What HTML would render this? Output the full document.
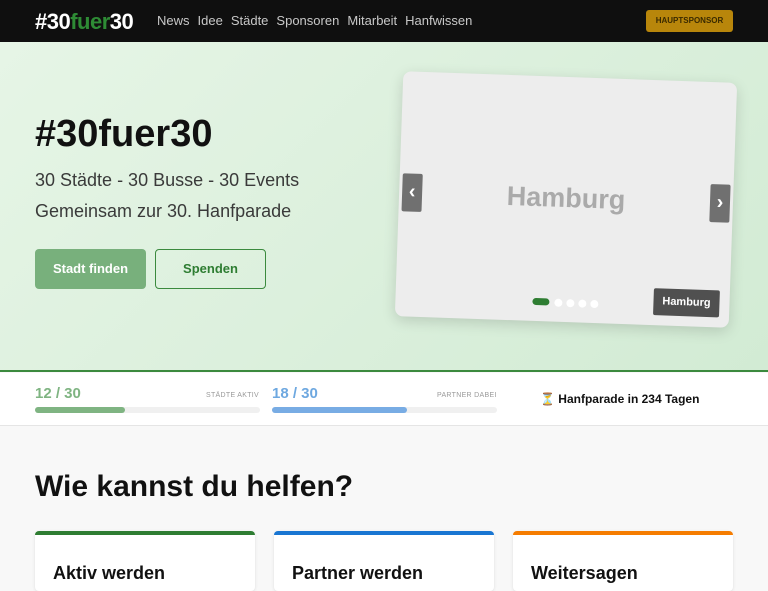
<!DOCTYPE html>
<html><head><meta charset="utf-8"><style>
*{box-sizing:border-box;margin:0;padding:0}
body{width:768px;height:576px;overflow:hidden;font-family:"Liberation Sans",sans-serif;background:#f8f8f8;position:relative}
.nav{position:absolute;left:0;top:0;width:768px;height:42px;background:#0f0f0f}
.logo{position:absolute;left:35px;top:9px;color:#fff;font-weight:bold;font-size:22px;letter-spacing:-0.5px}
.logo span{color:#2e8b35}
.links{position:absolute;left:157px;top:13px;font-size:13px;color:#c8c8c8}
.links span{margin-right:8px}
.hs{position:absolute;left:646px;top:10px;width:87px;height:22px;background:#b8860b;border-radius:3px;color:#3a2a00;font-size:8px;font-weight:bold;text-align:center;line-height:22px}
.hero{position:absolute;left:0;top:42px;width:768px;height:330px;background:linear-gradient(135deg,#e6f5e6,#d2ebd4);border-bottom:2px solid #3b8a3e}
h1{position:absolute;left:35px;top:113px;font-size:38px;color:#111;font-weight:bold}
.sub{position:absolute;left:35px;font-size:18px;color:#3a3a3a}
.btn{position:absolute;top:249px;height:40px;border-radius:4px;font-size:13px;font-weight:bold;text-align:center;line-height:38px}
.card{position:absolute;left:399px;top:77px;width:334px;height:245px;background:#ededed;border-radius:8px;transform:rotate(2deg);box-shadow:0 4px 14px rgba(0,0,0,.15)}
.dot{position:absolute;top:222px;width:8px;height:8px;background:#fff;border-radius:50%}
.stats{position:absolute;left:0;top:373px;width:768px;height:53px;background:#fff;border-bottom:1px solid #e5e5e5}
.num{position:absolute;top:12px;font-size:15px;font-weight:bold}
.lab{position:absolute;top:19px;font-size:7px;color:#999;letter-spacing:.3px}
.bar{position:absolute;top:34px;height:6px;border-radius:3px;background:#f0f0f0;width:225px}
.bar div{height:6px;border-radius:3px}
h2{position:absolute;left:35px;top:470px;font-size:30px;font-weight:bold;color:#111}
.c{position:absolute;top:531px;width:220px;height:60px;background:#fff;border-radius:4px;border-top:4px solid;box-shadow:0 1px 3px rgba(0,0,0,.1)}
.c b{position:absolute;left:18px;top:28px;font-size:18px;color:#111}
</style></head><body>
<div class="nav"><div class="logo">#30<span>fuer</span>30</div>
<div class="links"><span>News</span><span>Idee</span><span>Städte</span><span>Sponsoren</span><span>Mitarbeit</span><span>Hanfwissen</span></div>
<div class="hs">HAUPTSPONSOR</div></div>
<div class="hero"></div>
<h1>#30fuer30</h1>
<div class="sub" style="top:170px">30 Städte - 30 Busse - 30 Events</div>
<div class="sub" style="top:201px">Gemeinsam zur 30. Hanfparade</div>
<div class="btn" style="left:35px;width:111px;background:#78b07c;color:#fff;line-height:40px">Stadt finden</div>
<div class="btn" style="left:155px;width:111px;border:1.5px solid #3b8a3e;color:#2e7d32">Spenden</div>
<div class="card">
<div style="position:absolute;left:0;right:0;top:106px;text-align:center;font-size:27px;font-weight:bold;color:#aaa">Hamburg</div>
<div style="position:absolute;left:3px;top:102px;width:20px;height:38px;background:#707070;border-radius:2px;color:#fff;text-align:center;line-height:36px;font-size:20px;font-weight:bold">‹</div>
<div style="position:absolute;right:3px;top:102px;width:20px;height:38px;background:#707070;border-radius:2px;color:#fff;text-align:center;line-height:36px;font-size:20px;font-weight:bold">›</div>
<div style="position:absolute;left:137px;top:222px;width:17px;height:7px;background:#2e7d32;border-radius:4px"></div>
<div class="dot" style="left:159px"></div>
<div class="dot" style="left:171px"></div>
<div class="dot" style="left:183px"></div>
<div class="dot" style="left:195px"></div>
<div style="position:absolute;left:258px;top:208px;width:66px;height:27px;background:#505050;border-radius:2px;color:#fff;font-size:11px;font-weight:bold;text-align:center;line-height:27px">Hamburg</div>
</div>
<div class="stats">
<div class="num" style="left:35px;color:#7fb482">12 / 30</div>
<div class="lab" style="left:206px">STÄDTE AKTIV</div>
<div class="bar" style="left:35px"><div style="width:90px;background:#7fb482"></div></div>
<div class="num" style="left:272px;color:#6ea8e0">18 / 30</div>
<div class="lab" style="left:437px">PARTNER DABEI</div>
<div class="bar" style="left:272px"><div style="width:135px;background:#78ace4"></div></div>
<div style="position:absolute;left:540px;top:19px;font-size:12px;font-weight:bold;color:#111">⏳ Hanfparade in 234 Tagen</div>
</div>
<h2>Wie kannst du helfen?</h2>
<div class="c" style="left:35px;border-color:#2e7d32"><b>Aktiv werden</b></div>
<div class="c" style="left:274px;border-color:#1976d2"><b>Partner werden</b></div>
<div class="c" style="left:513px;border-color:#f57c00"><b>Weitersagen</b></div>
</body></html>
